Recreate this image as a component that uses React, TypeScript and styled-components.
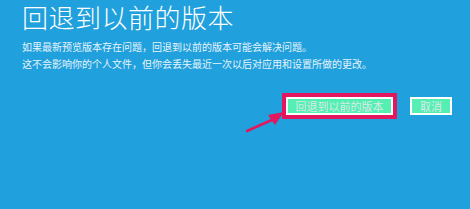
import React from 'react'
import styled, { createGlobalStyle } from 'styled-components'

const GlobalStyle = createGlobalStyle`
  html, body {
    margin: 0;
    padding: 0;
    background: #20a0dd;
  }
  body {
    font-family: "Noto Sans CJK SC", "Noto Sans", sans-serif;
  }
`

const Page = styled.div`
  width: 470px;
  height: 209px;
  box-sizing: border-box;
  padding: 0 18px 0 22px;
  background: #20a0dd;
  color: #ffffff;
  display: flex;
  flex-direction: column;
`

const Title = styled.h1`
  margin: 0;
  font-size: 26px;
  line-height: 34px;
  font-weight: 300;
  letter-spacing: 0.5px;
`

const Body = styled.div`
  margin-top: 4px;
  font-size: 10px;
  line-height: 17px;
  color: #e6f4fb;
`

const Line = styled.p`
  margin: 0;
`

const Actions = styled.div`
  margin-top: 21px;
  display: flex;
  justify-content: flex-end;
  align-items: center;
  gap: 13px;
`

const Highlight = styled.div`
  position: relative;
  border: 4px solid #e3175e;
  display: flex;
`

const Arrow = styled.svg`
  position: absolute;
  left: -42px;
  top: 12px;
  width: 42px;
  height: 26px;
  overflow: visible;
`

const Button = styled.button<{ $wide?: boolean }>`
  height: 18px;
  width: ${p => (p.$wide ? '107px' : '42px')};
  box-sizing: border-box;
  border: 2px solid #ffffff;
  background: #55eeb3;
  color: #d9ece6;
  font-family: "Noto Sans CJK SC", sans-serif;
  font-size: 11px;
  line-height: 14px;
  padding: 0;
  display: flex;
  align-items: center;
  justify-content: center;
`

export default function App() {
  return (
    <>
      <GlobalStyle />
      <Page>
        <Title>回退到以前的版本</Title>
        <Body>
          <Line>如果最新预览版本存在问题，回退到以前的版本可能会解决问题。</Line>
          <Line>这不会影响你的个人文件，但你会丢失最近一次以后对应用和设置所做的更改。</Line>
        </Body>
        <Actions>
          <Highlight>
            <Arrow viewBox="0 0 42 26">
              <path d="M3 22 L30 10" stroke="#e3175e" strokeWidth="2.5" strokeLinecap="round" />
              <polygon points="40,3 24,6 31,16" fill="#e3175e" />
            </Arrow>
            <Button $wide>回退到以前的版本</Button>
          </Highlight>
          <Button>取消</Button>
        </Actions>
      </Page>
    </>
  )
}
